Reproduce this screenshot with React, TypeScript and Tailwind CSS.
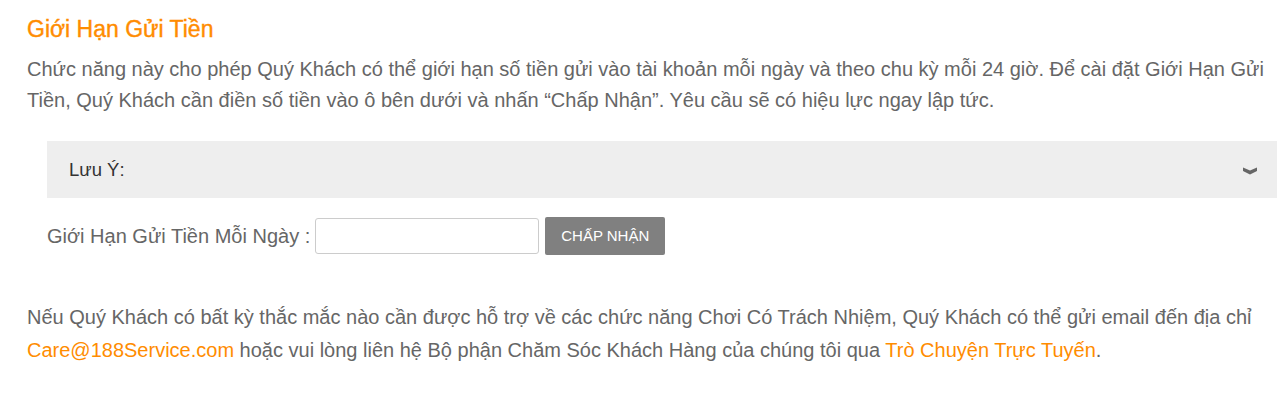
export default function App() {
  return (
    <div className="w-[1281px] h-[410px] bg-white font-['Liberation_Sans',Arial,sans-serif] text-[#666] overflow-hidden">
      <div className="pl-[27px] pr-[4px] pt-[14px]">
        <h1 className="text-[23px] leading-[30px] text-[#ff8c00] [-webkit-text-stroke:0.4px_#ff8c00]">Giới Hạn Gửi Tiền</h1>
        <p className="mt-[10px] text-[20px] leading-[31px]">
          Chức năng này cho phép Quý Khách có thể giới hạn số tiền gửi vào tài khoản mỗi ngày và theo chu kỳ mỗi 24 giờ. Để cài đặt Giới Hạn Gửi Tiền, Quý Khách cần điền số tiền vào ô bên dưới và nhấn “Chấp Nhận”. Yêu cầu sẽ có hiệu lực ngay lập tức.
        </p>

        <div className="ml-[20px] mt-[25px] h-[57px] bg-[#eeeeee] flex items-center justify-between pl-[22px] pr-[20px]">
          <span className="text-[18.5px] text-[#333]">Lưu Ý:</span>
          <svg width="14" height="8" viewBox="0 0 14 8" className="mt-[2px]">
            <path d="M0 0.5 L7 3.5 L14 0.5 L14 4 L7 7.5 L0 4 Z" fill="#666" />
          </svg>
        </div>

        <div className="ml-[20px] mt-[19px] flex items-center">
          <span className="text-[20px]">Giới Hạn Gửi Tiền Mỗi Ngày :</span>
          <input className="ml-[5px] w-[224px] h-[36px] border border-[#ccc] rounded-[3px] bg-white outline-none px-2" />
          <button className="ml-[6px] w-[120px] h-[38px] bg-[#808080] rounded-[2px] text-white text-[15px]">CHẤP NHẬN</button>
        </div>

        <p className="mt-[46px] text-[20px] leading-[33px]">
          Nếu Quý Khách có bất kỳ thắc mắc nào cần được hỗ trợ về các chức năng Chơi Có Trách Nhiệm, Quý Khách có thể gửi email đến địa chỉ{" "}
          <a className="text-[#ff8c00]">Care@188Service.com</a> hoặc vui lòng liên hệ Bộ phận Chăm Sóc Khách Hàng của chúng tôi qua{" "}
          <a className="text-[#ff8c00]">Trò Chuyện Trực Tuyến</a>.
        </p>
      </div>
    </div>
  );
}
